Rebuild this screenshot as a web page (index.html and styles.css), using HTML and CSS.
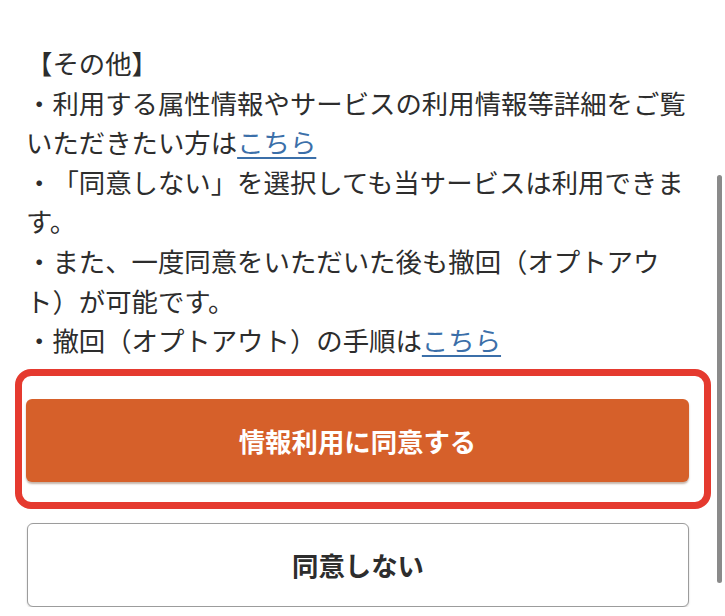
FILE: index.html
```html
<!DOCTYPE html>
<html lang="ja">
<head>
<meta charset="utf-8">
<title>情報利用の同意</title>
<link rel="stylesheet" href="styles.css">
</head>
<body>
<main class="page">
  <div class="notes">
    <p>【その他】</p>
    <p>・利用する属性情報やサービスの利用情報等詳細をご覧いただきたい方は<a class="link" href="#">こちら</a></p>
    <p>・「同意しない」を選択しても当サービスは利用できます。</p>
    <p>・また、一度同意をいただいた後も撤回（オプトアウト）が可能です。</p>
    <p>・撤回（オプトアウト）の手順は<a class="link" href="#">こちら</a></p>
  </div>
  <div class="highlight">
    <button class="btn btn-agree" type="button">情報利用に同意する</button>
  </div>
  <button class="btn btn-decline" type="button">同意しない</button>
</main>
<div class="scrollbar"></div>
</body>
</html>
```

FILE: styles.css
```css
html, body {
  margin: 0;
  padding: 0;
  background: #ffffff;
}

body {
  font-family: "Noto Sans CJK JP", "Noto Sans", sans-serif;
  color: #2d2d2d;
  overflow: hidden;
  text-spacing-trim: space-all;
}

.page {
  padding: 43px 0 0 26px;
  width: 672px;
}

.notes p {
  margin: 0;
  font-size: 26.4px;
  line-height: 39.6px;
}

.link {
  color: #3b6fa9;
  text-decoration: underline;
  text-decoration-thickness: 1.5px;
  text-underline-offset: 4px;
}

.highlight {
  margin: 9px 0 0 -11px;
  width: 673px;
  border: 7px solid #e53a2f;
  border-radius: 16px;
  padding: 23px 5px 20px 4px;
  box-sizing: content-box;
}

.btn {
  display: flex;
  align-items: center;
  justify-content: center;
  font-family: "Noto Sans CJK JP", "Noto Sans", sans-serif;
  font-size: 26.4px;
  font-weight: 700;
  border-radius: 6px;
  cursor: pointer;
  padding: 0;
}

.btn-agree {
  width: 663px;
  height: 83px;
  background: #d6602a;
  color: #ffffff;
  border: none;
  box-shadow: 0 2px 2px rgba(90, 40, 10, 0.35);
}

.btn-decline {
  margin: 14px 0 0 1px;
  width: 662px;
  height: 84px;
  background: #ffffff;
  color: #2d2d2d;
  border: 1.5px solid #9c9c9c;
  box-shadow: 0 1px 2px rgba(0, 0, 0, 0.18);
}

.scrollbar {
  position: absolute;
  left: 717px;
  top: 175px;
  width: 5px;
  height: 408px;
  border-radius: 3px;
  background: #8a8a8a;
}
```
